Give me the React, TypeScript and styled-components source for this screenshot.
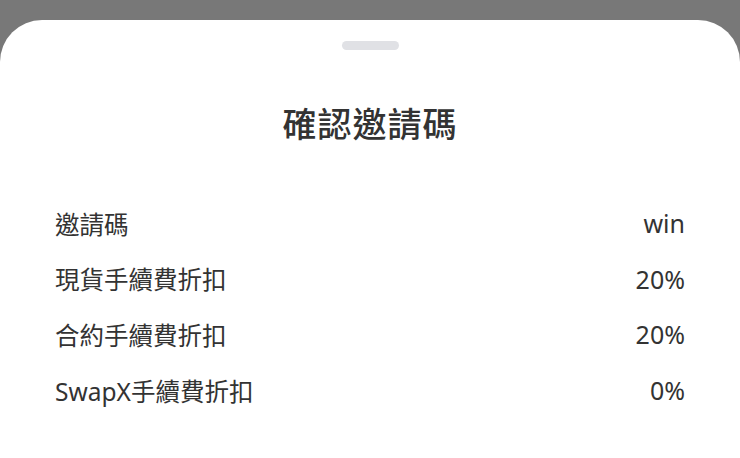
import styled, { createGlobalStyle } from "styled-components";

const GlobalStyle = createGlobalStyle`
    html, body {
        margin: 0;
        padding: 0;
        height: 100%;
    }
    body {
        font-family: "Noto Sans", "Noto Sans CJK TC", sans-serif;
    }
`;

const Backdrop = styled.div`
    width: 740px;
    height: 458px;
    background: #787878;
    padding-top: 20px;
    box-sizing: border-box;
    overflow: hidden;
`;

const Sheet = styled.div`
    height: 100%;
    background: #ffffff;
    border-radius: 42px 42px 0 0;
    display: flex;
    flex-direction: column;
    align-items: center;
`;

const Handle = styled.div`
    margin-top: 21px;
    width: 57px;
    height: 9px;
    border-radius: 5px;
    background: #e0e1e5;
`;

const Title = styled.h1`
    margin: 52px 0 0;
    font-size: 34px;
    line-height: 44px;
    font-weight: 500;
    color: #333333;
    letter-spacing: 1px;
`;

const List = styled.div`
    width: 100%;
    box-sizing: border-box;
    padding: 0 55px;
    margin-top: 61px;
    display: flex;
    flex-direction: column;
    gap: 23.7px;
`;

const Row = styled.div`
    display: flex;
    justify-content: space-between;
    align-items: center;
    height: 32px;
    font-size: 24.5px;
    color: #333333;
`;

const Value = styled.span`
    font-size: 25px;
`;

const rows = [
    { label: "邀請碼", value: "win" },
    { label: "現貨手續費折扣", value: "20%" },
    { label: "合約手續費折扣", value: "20%" },
    { label: "SwapX手續費折扣", value: "0%" },
];

export default function App() {
    return (<>
        <GlobalStyle />
        <Backdrop>
            <Sheet>
                <Handle />
                <Title>確認邀請碼</Title>
                <List>
                    {rows.map((r) => (
                        <Row key={r.label}>
                            <span>{r.label}</span>
                            <Value>{r.value}</Value>
                        </Row>
                    ))}
                </List>
            </Sheet>
        </Backdrop>
    </>);
}
